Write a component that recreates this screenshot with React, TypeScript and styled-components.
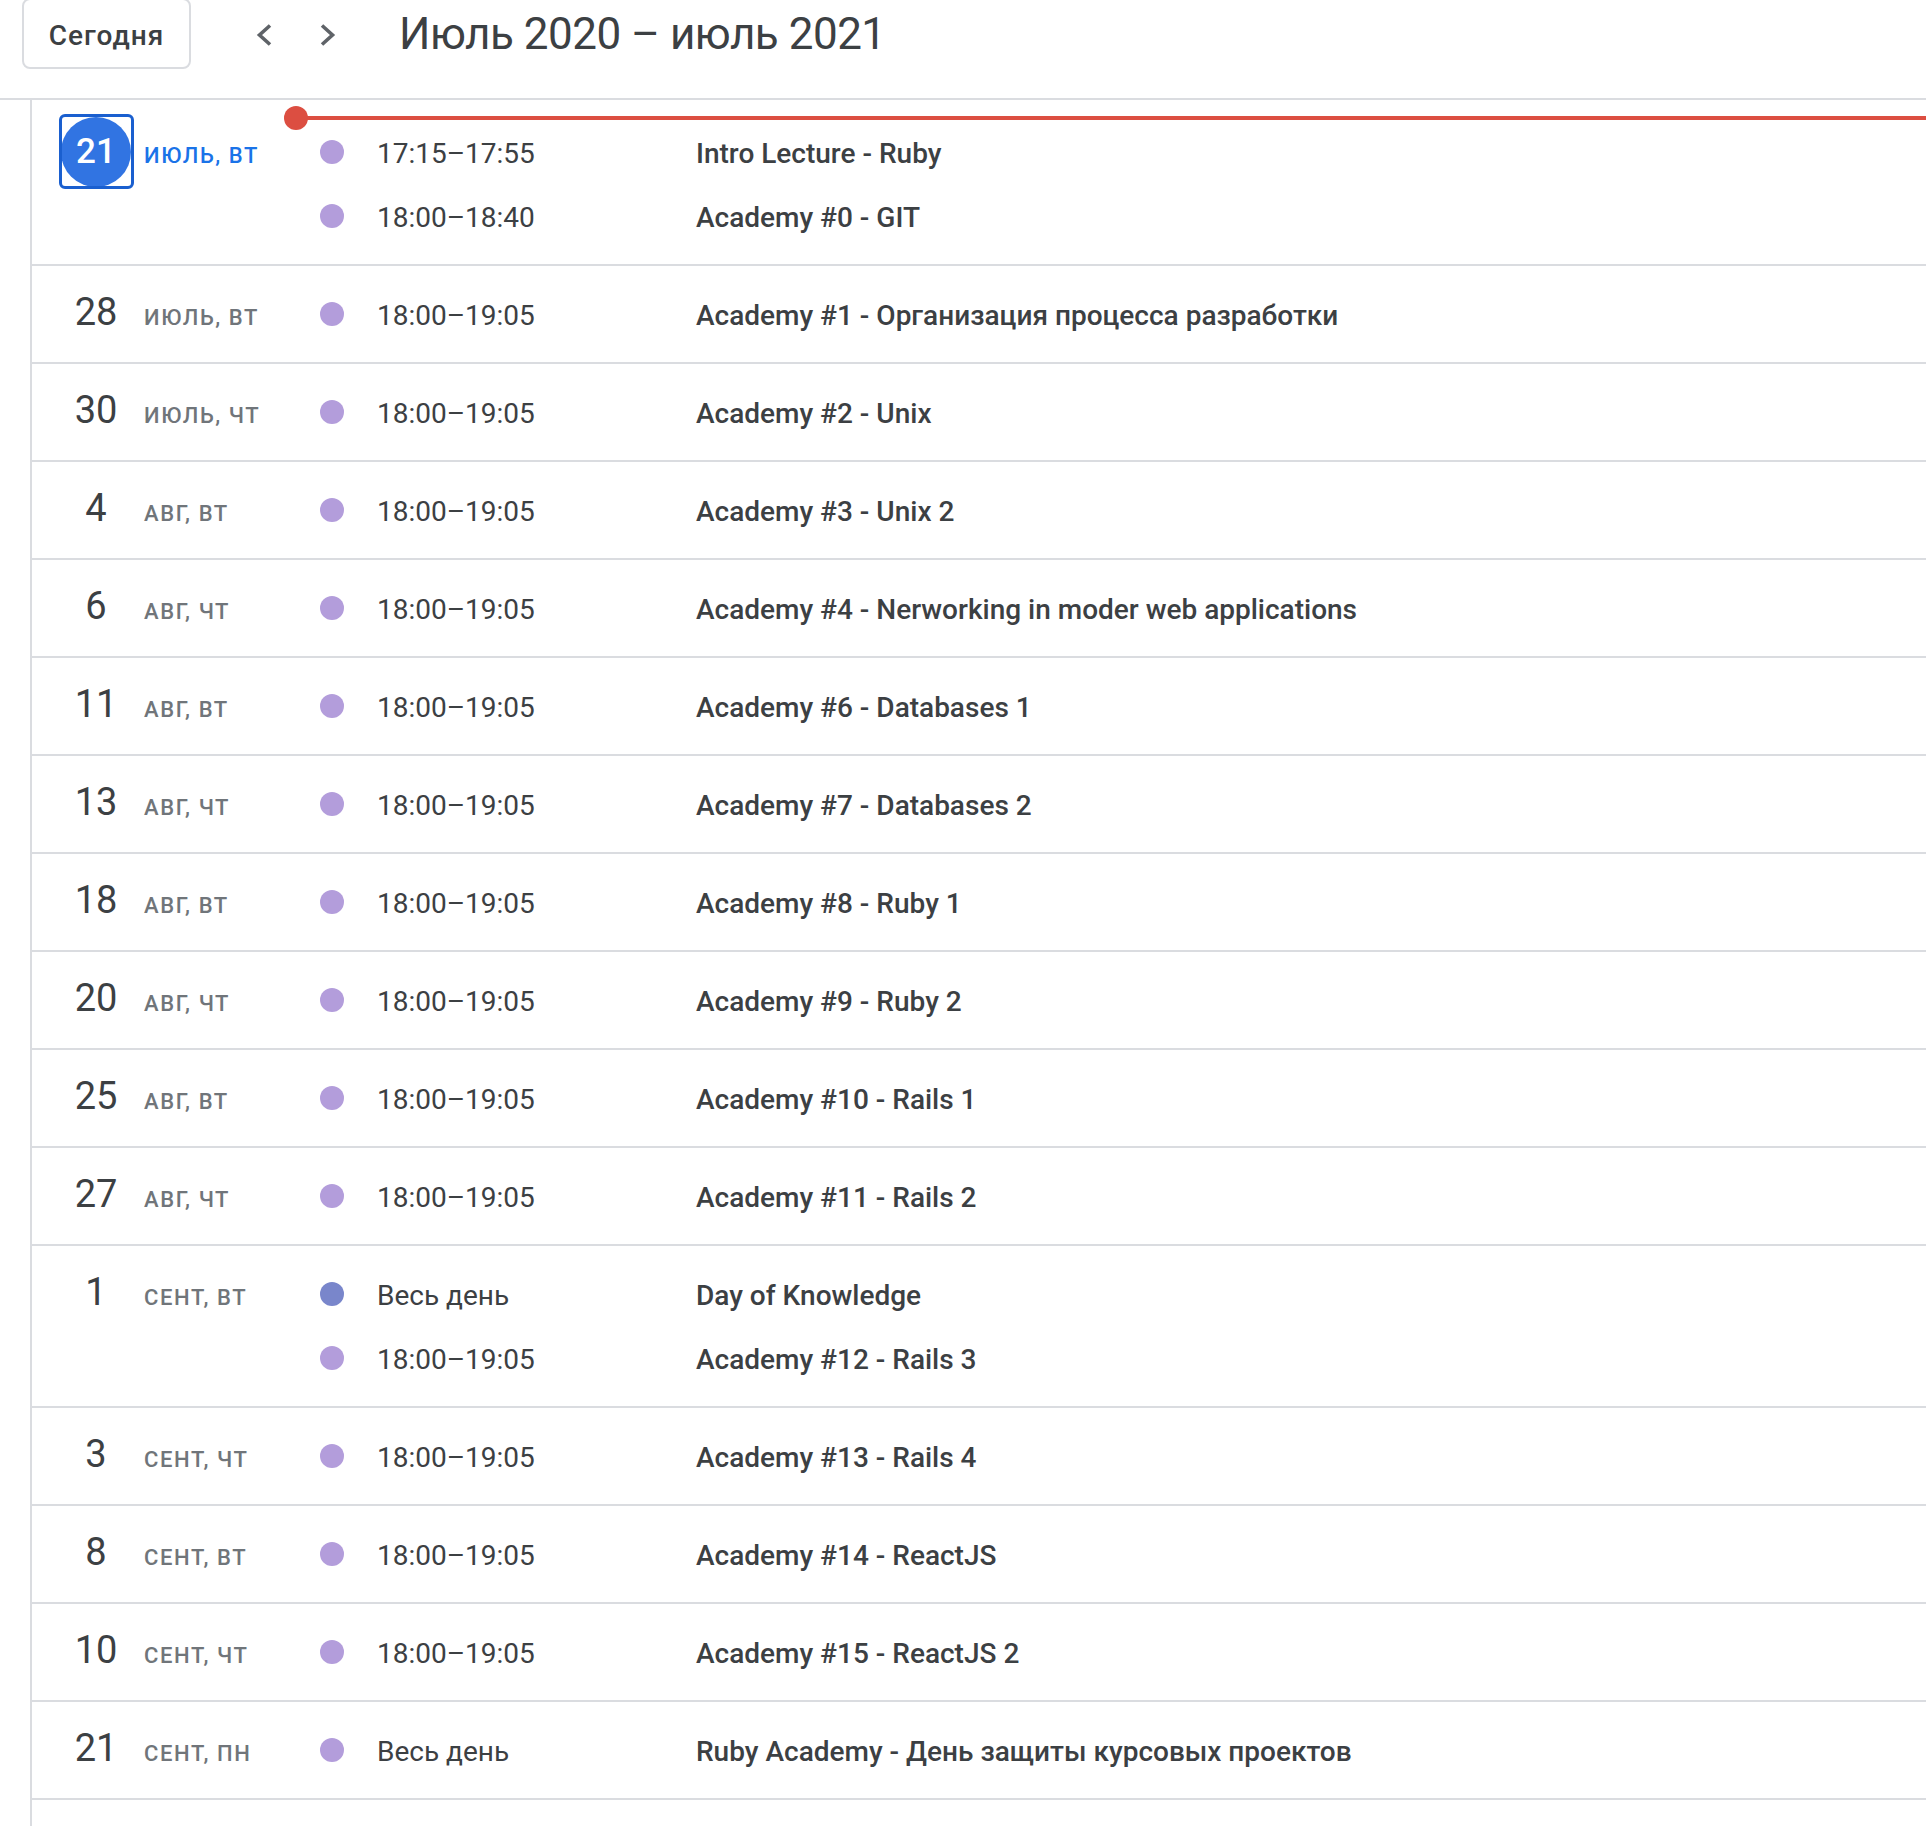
import React from 'react';
import styled, { createGlobalStyle } from 'styled-components';

const GlobalStyle = createGlobalStyle`
  html, body {
    margin: 0;
    padding: 0;
    background: #ffffff;
    overflow: hidden;
  }
  body {
    font-family: Roboto, "Noto Sans", "Liberation Sans", sans-serif;
    color: #3c4043;
  }
`;

const Page = styled.div`
  width: 1926px;
  height: 1826px;
  display: flex;
  flex-direction: column;
  overflow: hidden;
  background: #ffffff;
`;

const Header = styled.header`
  height: 98px;
  flex-shrink: 0;
  display: flex;
  align-items: flex-start;
  border-bottom: 2px solid #dadce0;
`;

const TodayButton = styled.button`
  margin: -2px 0 0 22px;
  width: 169px;
  height: 71px;
  box-sizing: border-box;
  border: 2px solid #dadce0;
  border-radius: 8px;
  background: #ffffff;
  padding: 3px 0 0;
  font-family: Roboto, "Noto Sans", sans-serif;
  font-weight: 500;
  font-size: 28px;
  letter-spacing: 1px;
  color: #3c4043;
  cursor: pointer;
`;

const NavGroup = styled.div`
  display: flex;
  gap: 16px;
  margin: 11px 0 0 49px;
`;

const NavButton = styled.button`
  width: 48px;
  height: 48px;
  border: none;
  background: transparent;
  padding: 0;
  display: flex;
  align-items: center;
  justify-content: center;
  color: #5f6368;
  cursor: pointer;
`;

const Title = styled.h1`
  margin: 0 0 0 47px;
  font-family: Roboto, "Noto Sans", sans-serif;
  font-weight: 400;
  font-size: 44px;
  letter-spacing: -0.5px;
  line-height: 68px;
  color: #3c4043;
`;

const Agenda = styled.main`
  flex: 1;
  margin-left: 30px;
  border-left: 2px solid #dadce0;
`;

const DayRow = styled.section`
  padding: 16px 0;
  border-bottom: 2px solid #dadce0;
`;

const NowLine = styled.div`
  position: relative;
  height: 4px;
  margin-left: 264px;
  background: #dc4e41;

  &::before {
    content: '';
    position: absolute;
    left: -12px;
    top: -10px;
    width: 24px;
    height: 24px;
    border-radius: 50%;
    background: #dc4e41;
  }
`;

const RowBody = styled.div`
  display: flex;
  align-items: baseline;
  padding-left: 30px;
`;

const DateArea = styled.div`
  width: 258px;
  flex-shrink: 0;
  display: flex;
  align-items: baseline;
`;

const DayNum = styled.div`
  width: 68px;
  flex-shrink: 0;
  text-align: center;
  font-size: 38px;
  line-height: 56px;
  color: #3c4043;
`;

const TodayBadge = styled.div`
  width: 75px;
  height: 75px;
  flex-shrink: 0;
  margin: -8px -3.5px -4px;
  box-sizing: border-box;
  border: 3px solid #1a5fcf;
  border-radius: 6px;
  display: flex;
  align-items: center;
  justify-content: center;
  overflow: hidden;
`;

const TodayCircle = styled.div`
  width: 70px;
  height: 70px;
  flex-shrink: 0;
  border-radius: 50%;
  background: #3174e2;
  color: #ffffff;
  font-size: 35px;
  font-weight: 500;
  display: flex;
  align-items: center;
  justify-content: center;
`;

const DayLabel = styled.div<{ $today?: boolean }>`
  margin-left: 14px;
  font-size: 22px;
  font-weight: 500;
  line-height: 40px;
  letter-spacing: 1.6px;
  text-transform: uppercase;
  white-space: nowrap;
  color: ${(p) => (p.$today ? '#1a73e8' : '#70757a')};
`;

const Events = styled.div`
  flex: 1;
  display: flex;
  flex-direction: column;
`;

const EventLine = styled.div`
  height: 64px;
  display: flex;
  align-items: baseline;
`;

const Dot = styled.span<{ $color: string }>`
  width: 24px;
  height: 24px;
  flex-shrink: 0;
  align-self: center;
  border-radius: 50%;
  background: ${(p) => p.$color};
`;

const Time = styled.span`
  width: 319px;
  flex-shrink: 0;
  margin-left: 33px;
  padding-top: 3px;
  font-size: 28px;
  font-weight: 400;
  line-height: 61px;
  color: #3c4043;
  white-space: nowrap;
`;

const EventTitle = styled.span`
  padding-top: 3px;
  font-size: 28px;
  font-weight: 500;
  line-height: 61px;
  color: #3c4043;
  white-space: nowrap;
`;

const LIGHT = '#b39ddb';
const DARK = '#7986cb';

type Ev = { time: string; title: string; color?: string };
type Day = { num: string; label: string; today?: boolean; events: Ev[] };

const T = '18:00–19:05';

const days: Day[] = [
  {
    num: '21',
    label: 'июль, вт',
    today: true,
    events: [
      { time: '17:15–17:55', title: 'Intro Lecture - Ruby' },
      { time: '18:00–18:40', title: 'Academy #0 - GIT' },
    ],
  },
  { num: '28', label: 'июль, вт', events: [{ time: T, title: 'Academy #1 - Организация процесса разработки' }] },
  { num: '30', label: 'июль, чт', events: [{ time: T, title: 'Academy #2 - Unix' }] },
  { num: '4', label: 'авг, вт', events: [{ time: T, title: 'Academy #3 - Unix 2' }] },
  { num: '6', label: 'авг, чт', events: [{ time: T, title: 'Academy #4 - Nerworking in moder web applications' }] },
  { num: '11', label: 'авг, вт', events: [{ time: T, title: 'Academy #6 - Databases 1' }] },
  { num: '13', label: 'авг, чт', events: [{ time: T, title: 'Academy #7 - Databases 2' }] },
  { num: '18', label: 'авг, вт', events: [{ time: T, title: 'Academy #8 - Ruby 1' }] },
  { num: '20', label: 'авг, чт', events: [{ time: T, title: 'Academy #9 - Ruby 2' }] },
  { num: '25', label: 'авг, вт', events: [{ time: T, title: 'Academy #10 - Rails 1' }] },
  { num: '27', label: 'авг, чт', events: [{ time: T, title: 'Academy #11 - Rails 2' }] },
  {
    num: '1',
    label: 'сент, вт',
    events: [
      { time: 'Весь день', title: 'Day of Knowledge', color: DARK },
      { time: T, title: 'Academy #12 - Rails 3' },
    ],
  },
  { num: '3', label: 'сент, чт', events: [{ time: T, title: 'Academy #13 - Rails 4' }] },
  { num: '8', label: 'сент, вт', events: [{ time: T, title: 'Academy #14 - ReactJS' }] },
  { num: '10', label: 'сент, чт', events: [{ time: T, title: 'Academy #15 - ReactJS 2' }] },
  {
    num: '21',
    label: 'сент, пн',
    events: [{ time: 'Весь день', title: 'Ruby Academy - День защиты курсовых проектов' }],
  },
];

const ChevronLeft = () => (
  <svg width="24" height="24" viewBox="0 0 24 24" aria-hidden="true">
    <path d="M18 2.5 L7.5 12 L18 21.5" fill="none" stroke="currentColor" strokeWidth="3.6" strokeLinejoin="miter" />
  </svg>
);

const ChevronRight = () => (
  <svg width="24" height="24" viewBox="0 0 24 24" aria-hidden="true">
    <path d="M6 2.5 L16.5 12 L6 21.5" fill="none" stroke="currentColor" strokeWidth="3.6" strokeLinejoin="miter" />
  </svg>
);

export default function App() {
  return (
    <Page>
      <GlobalStyle />
      <Header>
        <TodayButton>Сегодня</TodayButton>
        <NavGroup>
          <NavButton aria-label="Назад">
            <ChevronLeft />
          </NavButton>
          <NavButton aria-label="Вперёд">
            <ChevronRight />
          </NavButton>
        </NavGroup>
        <Title>Июль 2020 – июль 2021</Title>
      </Header>
      <Agenda>
        {days.map((d, i) => (
          <DayRow key={i}>
            {d.today && <NowLine />}
            <RowBody>
              <DateArea>
                {d.today ? (
                  <TodayBadge>
                    <TodayCircle>{d.num}</TodayCircle>
                  </TodayBadge>
                ) : (
                  <DayNum>{d.num}</DayNum>
                )}
                <DayLabel $today={d.today}>{d.label}</DayLabel>
              </DateArea>
              <Events>
                {d.events.map((e, j) => (
                  <EventLine key={j}>
                    <Dot $color={e.color ?? LIGHT} />
                    <Time>{e.time}</Time>
                    <EventTitle>{e.title}</EventTitle>
                  </EventLine>
                ))}
              </Events>
            </RowBody>
          </DayRow>
        ))}
      </Agenda>
    </Page>
  );
}
